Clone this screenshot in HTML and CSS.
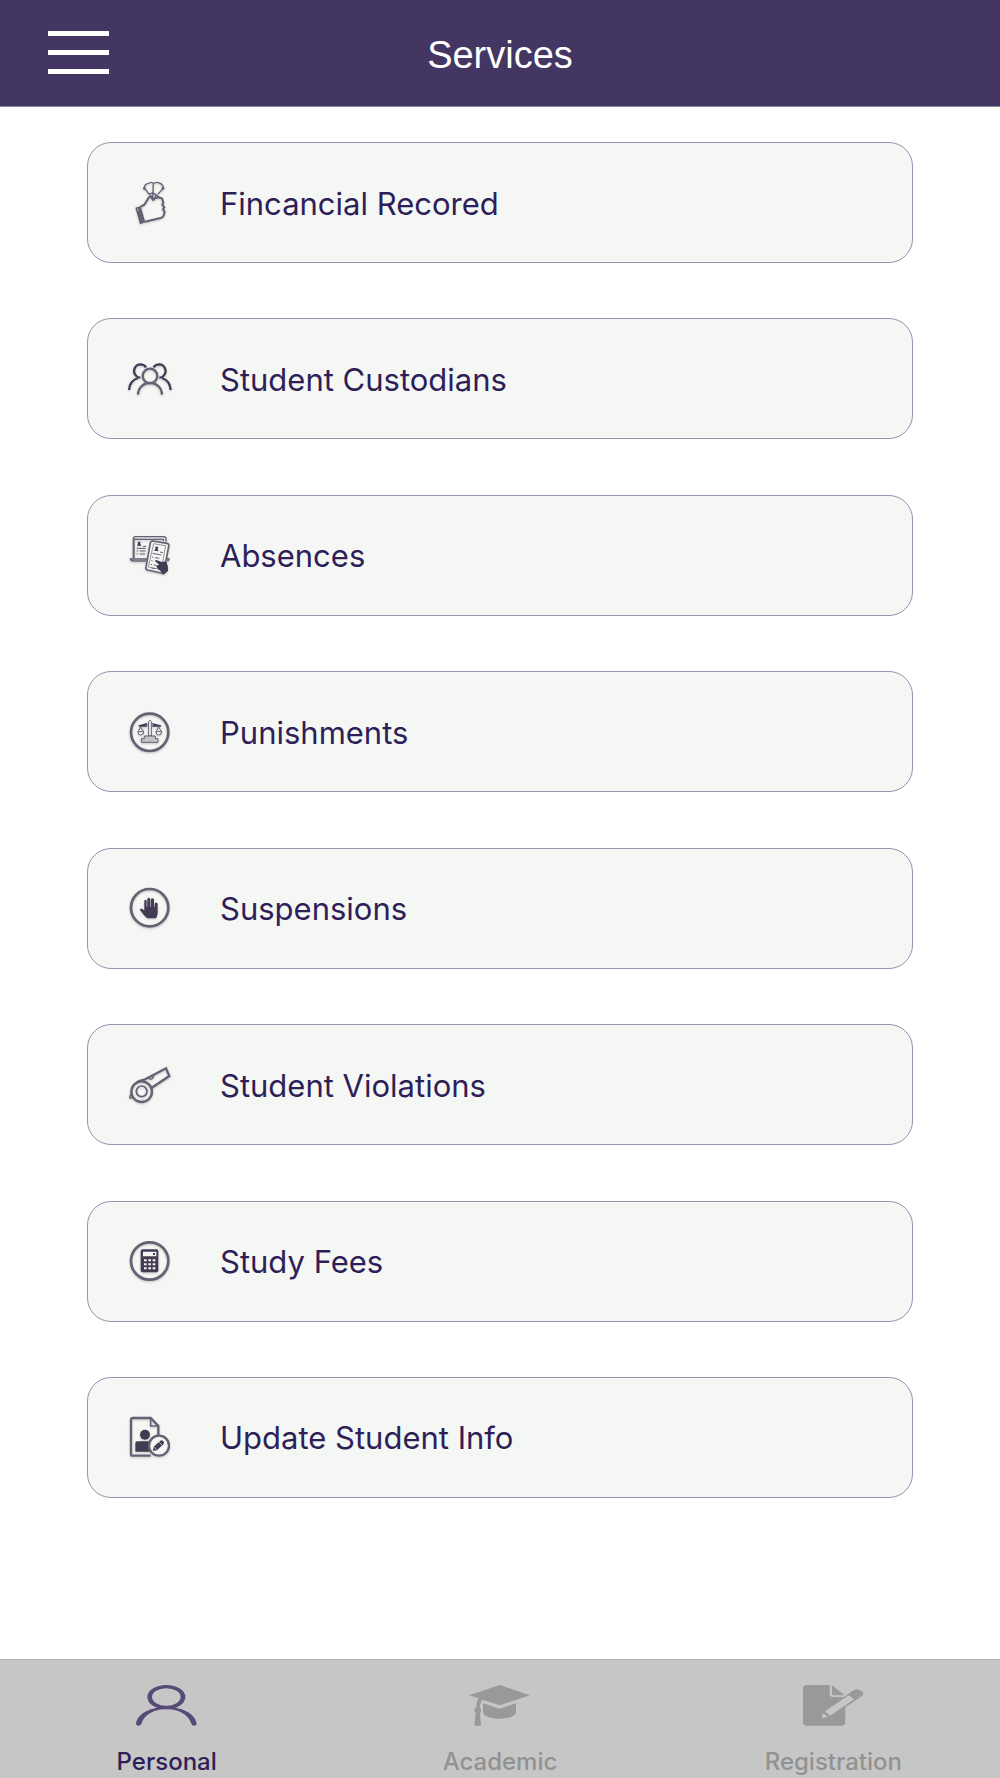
FILE: index.html
```html
<!DOCTYPE html>
<html lang="en">
<head>
  <meta charset="UTF-8">
  <meta name="viewport" content="width=device-width, initial-scale=1">
  <title>Services</title>
  <link rel="stylesheet" href="styles.css">
</head>
<body>

  <header class="header">
    <button class="menu-btn" type="button" aria-label="Menu">
      <span></span>
      <span></span>
      <span></span>
    </button>
    <h1>Services</h1>
  </header>

  <main class="services">
    <a class="card" href="#">
      <svg class="icon" viewBox="0 8 180 180">
        <path d="M62 109 L73 103 L86 82 Q91 76 95 83 L99 88 Q109 78 126 84 L130 97 L127 103 L133 111 L129 117 L134 125 L131 136 Q129 141 122 143 L75 154" stroke-width="6"/>
        <path class="fill" d="M46 112 L62 107 L76 156 L60 162 Z"/>
        <path d="M53 115 L55 121" stroke="#f5f7f5" stroke-width="2"/>
        <path d="M88 72 L73 53 Q73 40 87 39 Q95 33 100 40 Q108 33 118 38 Q130 42 130 54 L113 72 M100 37 L98 90 M86 73 Q98 61 119 82 M91 74 L102 88 L109 73" stroke-width="4"/>
        <circle class="fill" cx="73" cy="54" r="4"/>
        <circle class="fill" cx="129" cy="54" r="4"/>
      </svg>
      <span>Fincancial Recored</span>
    </a>

    <a class="card" href="#">
      <svg class="icon" viewBox="0 -3 180 180">
        <g class="dark">
          <path d="M78 52 Q73 43 61 43 A19 20 0 0 0 47 76 Q52 83 61 83 M101 52 Q106 43 118 43 A19 20 0 0 1 132 76 Q127 83 118 83 M27 120 Q29 92 54 84 M152 120 Q150 92 126 84"/>
        </g>
        <circle cx="90" cy="78" r="22"/>
        <path d="M54 134 C56 87 124 87 126 134"/>
      </svg>
      <span>Student Custodians</span>
    </a>

    <a class="card" href="#">
      <svg class="icon" viewBox="0 1 180 180">
        <path d="M40 101 V43 Q40 36 47 36 H132 Q138 36 138 43 V51 M42 101 V44 H130 V49" stroke-width="4"/>
        <path d="M81 103 H31 Q32 109 40 109 H78 M139 103 H147 Q146 108 142 109" stroke-width="4"/>
        <path class="fill dark" d="M53 51 H61 V57 L64 63 H51 L54 57 Z"/>
        <path d="M69 65 H79 M50 71 H77 M50 79 H54 M59 79 H77 M50 88 H54 M59 88 H75" stroke-width="3"/>
        <path class="paper" d="M98 49 L141 56 Q148 58 146 65 L132 140 Q130 146 124 145 L83 136 Q77 135 78 128 L91 55 Q92 49 98 49 Z" stroke-width="5"/>
        <path d="M101 57 L137 63 L124 135 L85 127 Z" stroke-width="2"/>
        <path class="fill dark" d="M107 65 L115 67 L113 74 L116 80 L102 78 L106 73 Z"/>
        <path d="M120 82 L129 84 M98 86 L124 91 M96 97 L100 98 M105 99 L118 101 M94 108 L98 109 M92 119 L96 120 M101 121 L109 122 M94 130 L106 132" stroke-width="3"/>
        <path class="fill dark" d="M107 105 L125 112 L137 110 Q145 121 144 139 L129 151 Q125 140 113 132 L108 123 L117 120 L105 109 Z"/>
      </svg>
      <span>Absences</span>
    </a>

    <a class="card" href="#">
      <svg class="icon" viewBox="0 5 180 180">
        <circle cx="89" cy="96" r="56" stroke-width="8"/>
        <path class="dark" d="M56 77 Q74 73 82 70 M97 70 Q109 74 123 77 M56 77 H82 M97 77 H123" stroke-width="5"/>
        <path class="paper" d="M86 107 V64 Q90 55 94 64 V107 Z" stroke-width="3"/>
        <path d="M62 80 L54 94 M62 80 L71 94 M116 80 L108 94 M116 80 L125 94" stroke-width="3"/>
        <path class="paper" d="M54 94 H71 Q71 104 62 104 Q54 104 54 94 Z M108 94 H125 Q125 104 116 104 Q108 104 108 94 Z" stroke-width="3"/>
        <path class="shade" d="M73 107 H106 V115 H114 V126 H64 V115 H73 Z" stroke-width="3"/>
      </svg>
      <span>Punishments</span>
    </a>

    <a class="card" href="#">
      <svg class="icon" viewBox="0 1 180 180">
        <circle cx="89" cy="90" r="56" stroke-width="8"/>
        <path class="fill dark" d="M73 98 V69 Q76 63 80 69 V87 H82 V64 Q86 56 91 64 V87 H93 V65 Q98 58 102 65 V88 H104 V78 Q109 71 113 78 V107 Q111 118 108 122 H82 Q75 117 70 110 L60 97 Q61 90 67 94 Z"/>
      </svg>
      <span>Suspensions</span>
    </a>

    <a class="card" href="#">
      <svg class="icon" viewBox="0 2 180 180">
        <circle cx="65" cy="112" r="31"/>
        <circle cx="65" cy="111" r="16" stroke-width="5"/>
        <path d="M50 84 Q58 80 73 76 L138 42 L148 65 L94 101"/>
        <path d="M86 70 Q88 77 96 73 L102 65" stroke-width="4"/>
        <path d="M35 121 Q27 123 30 131 L38 130" stroke-width="4"/>
      </svg>
      <span>Student Violations</span>
    </a>

    <a class="card" href="#">
      <svg class="icon" viewBox="0 3 180 180">
        <circle cx="89" cy="93" r="56" stroke-width="8"/>
        <rect class="fill dark" x="62" y="58" width="53" height="69" rx="6"/>
        <path class="light" d="M69 65 H109 V79 H69 Z M72 88 H80 V94 H72 Z M85 88 H93 V94 H85 Z M98 88 H106 V94 H98 Z M72 100 H80 V106 H72 Z M85 100 H93 V106 H85 Z M98 100 H106 V106 H98 Z M72 112 H80 V118 H72 Z M85 112 H93 V118 H85 Z M98 112 H106 V118 H98 Z"/>
        <rect class="fill dark" x="99" y="69" width="6" height="6"/>
      </svg>
      <span>Study Fees</span>
    </a>

    <a class="card" href="#">
      <svg class="icon" viewBox="0 4 180 180">
        <path d="M92 150 H38 Q33 150 33 145 V43 Q33 37 39 37 H92 L115 61 V88"/>
        <path d="M92 38 V61 H115" stroke-width="5"/>
        <circle class="fill dark" cx="75" cy="87" r="15"/>
        <path class="fill dark" d="M46 138 V113 Q46 107 52 107 H90 V138 Z"/>
        <circle class="paper" cx="117" cy="120" r="30"/>
        <path class="fill dark" d="M99 136 L101 123 L121 105 Q126 102 130 107 Q134 112 130 116 L111 134 Z"/>
        <path d="M117 109 L127 119 M103 124 L109 132" stroke="#f5f7f5" stroke-width="2"/>
      </svg>
      <span>Update Student Info</span>
    </a>
  </main>

  <nav class="tabs">
    <a class="tab active" href="#">
      <svg viewBox="168 135 183 123">
        <path fill="currentColor" fill-rule="evenodd" d="M202 171 A57 36 0 0 1 316 171 A57 37 0 0 1 202 171 Z M216 171 A43 26 0 0 0 302 171 A43 26 0 0 0 216 171 Z"/>
        <path fill="currentColor" d="M168 251 C178 184 340 184 350 251 Q350 257 342 257 Q336 257 334 251 C316 192 202 192 184 251 Q182 257 176 257 Q168 257 168 251 Z"/>
      </svg>
      <span>Personal</span>
    </a>
    <a class="tab" href="#">
      <svg viewBox="1167 135 183 123">
        <path d="M1167 166 L1259 135 L1350 166 L1259 196 L1207 179 Q1200 189 1199 202 Q1207 211 1200 219 L1203 257 H1183 L1187 219 Q1178 210 1188 202 Q1189 186 1196 175 Z"/>
        <path d="M1209 190 L1259 206 L1308 190 V216 C1307 243 1210 243 1209 216 Z"/>
      </svg>
      <span>Academic</span>
    </a>
    <a class="tab" href="#">
      <svg viewBox="188 135 183 123">
        <path d="M200 135 H268 V162 Q268 171 278 171 H315 V246 Q315 257 303 257 H200 Q188 257 188 246 V146 Q188 135 200 135 Z"/>
        <path d="M275 136 L313 166 H281 Q275 166 275 161 Z"/>
        <path d="M306 174 L341 150 Q350 144 362 152 Q374 159 366 167 L315 202 Z"/>
        <path class="pencil" d="M254 214 L325 166 L342 178 L269 227 Z M249 220 L262 231 L243 234 Z"/>
      </svg>
      <span>Registration</span>
    </a>
  </nav>

</body>
</html>
```
FILE: styles.css
```css
* {
  box-sizing: border-box;
}

body {
  margin: 0;
  min-height: 100vh;
  display: flex;
  flex-direction: column;
  background-color: #fff;
  font-family: Inter, "Liberation Sans", sans-serif;
}

a {
  text-decoration: none;
}

.header {
  display: grid;
  grid-template-columns: 61px 1fr 61px;
  align-items: center;
  height: 107px;
  padding: 0 48px 2px;
  background-color: #433663;
  border-bottom: 1px solid #8d86a0;
}

.header h1 {
  margin: 0;
  padding-top: 5px;
  color: #fff;
  font-family: "Liberation Sans", Arial, sans-serif;
  font-size: 38px;
  font-weight: normal;
  line-height: 44px;
  text-align: center;
}

.menu-btn {
  display: flex;
  flex-direction: column;
  gap: 14px;
  padding: 0;
  border: none;
  background: none;
  cursor: pointer;
}

.menu-btn span {
  width: 100%;
  height: 5px;
  background-color: #fff;
}

/* cards spread over the space between header and tabs */
.services {
  flex: 1;
  display: flex;
  flex-direction: column;
  justify-content: space-between;
  gap: 24px;
  padding: 35px 87px 161px;
}

.card {
  display: flex;
  align-items: center;
  gap: 40px;
  height: 121px;
  padding: 0 32px;
  background-color: #f5f7f5;
  border: 1px solid #9692b0;
  border-radius: 24px;
  color: #2e1f58;
  font-size: 31px;
  line-height: 40px;
}

.card span {
  padding-top: 2px;
}

.icon {
  flex: none;
  width: 60px;
  height: 60px;
  fill: none;
  stroke: #675f73;
  stroke-width: 7px;
  filter: drop-shadow(0 1px 1px rgba(0, 0, 0, 0.2));
}

.icon .fill {
  fill: #675f73;
  stroke: none;
}

.icon .dark {
  stroke: #433b53;
}

.icon .fill.dark {
  fill: #433b53;
  stroke: none;
}

.icon .paper {
  fill: #f5f7f5;
}

.icon .shade {
  fill: #c4c2c9;
}

.icon .light {
  fill: #f5f7f5;
  stroke: none;
}

.tabs {
  display: flex;
  background-color: #c6c6c6;
  border-top: 1px solid #b0b0b0;
}

.tab {
  flex: 1;
  display: flex;
  flex-direction: column;
  align-items: center;
  gap: 22px;
  padding: 25px 0 2px;
  color: #929292;
  font-size: 24px;
  font-weight: 500;
  line-height: 28px;
}

.tab svg {
  width: 61px;
  height: 41px;
  color: #574a77;
  fill: #999;
}

.tab .pencil {
  fill: #c6c6c6;
}

.tab.active {
  color: #2e1f58;
}
```
